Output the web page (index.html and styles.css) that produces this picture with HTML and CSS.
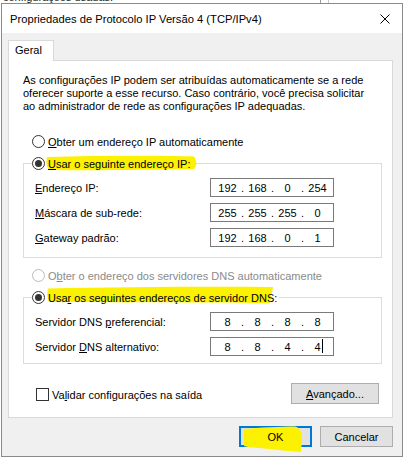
FILE: index.html
```html
<!DOCTYPE html>
<html lang="pt-BR">
<head>
<meta charset="utf-8">
<title>Propriedades de Protocolo IP Versão 4 (TCP/IPv4)</title>
<link rel="stylesheet" href="styles.css">
</head>
<body>
<div class="desk">
  <div class="bg-frag">configurações usadas:</div>
  <div class="bg-frame"></div>
  <div class="dialog">
    <div class="titlebar">
      <span class="title">Propriedades de Protocolo IP Versão 4 (TCP/IPv4)</span>
      <svg class="close" viewBox="0 0 10 10" width="10" height="10" aria-hidden="true">
        <path d="M0.5 0.5 L9.5 9.5 M9.5 0.5 L0.5 9.5" stroke="#000" stroke-width="1" fill="none"/>
      </svg>
    </div>
    <div class="body">
      <div class="tabs"><div class="tab">Geral</div></div>
      <div class="panel">
        <p class="intro">As configurações IP podem ser atribuídas automaticamente se a rede<br>oferecer suporte a esse recurso. Caso contrário, você precisa solicitar<br>ao administrador de rede as configurações IP adequadas.</p>

        <div class="opt first"><span class="radio"></span><span><u>O</u>bter um endereço IP automaticamente</span></div>

        <fieldset class="group">
          <legend><span class="opt"><span class="radio on"></span><span class="hl"><u>U</u>sar o seguinte endereço IP:</span></span></legend>
          <div class="field"><label><u>E</u>ndereço IP:</label>
            <div class="ip"><span class="seg">192</span><span class="dot">.</span><span class="seg">168</span><span class="dot">.</span><span class="seg">0</span><span class="dot">.</span><span class="seg">254</span></div>
          </div>
          <div class="field"><label><u>M</u>áscara de sub-rede:</label>
            <div class="ip"><span class="seg">255</span><span class="dot">.</span><span class="seg">255</span><span class="dot">.</span><span class="seg">255</span><span class="dot">.</span><span class="seg">0</span></div>
          </div>
          <div class="field"><label><u>G</u>ateway padrão:</label>
            <div class="ip"><span class="seg">192</span><span class="dot">.</span><span class="seg">168</span><span class="dot">.</span><span class="seg">0</span><span class="dot">.</span><span class="seg">1</span></div>
          </div>
        </fieldset>

        <div class="opt second disabled"><span class="radio off"></span><span>O<u>b</u>ter o endereço dos servidores DNS automaticamente</span></div>

        <fieldset class="group dns">
          <legend><span class="opt"><span class="radio on"></span><span class="hl">Usa<u>r</u> os seguintes endereços de servidor DNS:</span></span></legend>
          <div class="field"><label>Servidor DNS <u>p</u>referencial:</label>
            <div class="ip"><span class="seg">8</span><span class="dot">.</span><span class="seg">8</span><span class="dot">.</span><span class="seg">8</span><span class="dot">.</span><span class="seg">8</span></div>
          </div>
          <div class="field"><label>Servidor <u>D</u>NS alternativo:</label>
            <div class="ip"><span class="seg">8</span><span class="dot">.</span><span class="seg">8</span><span class="dot">.</span><span class="seg">4</span><span class="dot">.</span><span class="seg">4</span><span class="caret"></span></div>
          </div>
        </fieldset>

        <div class="bottom-row">
          <div class="check"><span class="box"></span><span>Va<u>l</u>idar configurações na saída</span></div>
          <button class="btn wide"><u>A</u>vançado...</button>
        </div>
      </div>
      <div class="actions">
        <button class="btn default"><span class="hl">OK</span></button>
        <button class="btn">Cancelar</button>
      </div>
    </div>
  </div>
  <svg class="marker" viewBox="0 0 404 458" width="404" height="458" aria-hidden="true">
    <path d="M47 157 C100 155.5 160 155.5 194 156.5 C197 160 197 166 194 169 C150 170 90 170.5 49 170 C46 166 46 160 47 157 Z"/>
    <path d="M48 288.5 C120 287 200 286.5 273 287 L270 303 C200 302.5 110 302.5 49 302 C47 298 47 292 48 288.5 Z"/>
    <path d="M244 429 C260 427.5 280 426.5 295 426.5 C300 427.5 302 432 302 440 L301 452 C285 451 262 448 248 447 L244 446 Z"/>
  </svg>
</div>
</body>
</html>
```

FILE: styles.css
```css
* {
  box-sizing: border-box;
}

html,
body {
  margin: 0;
  padding: 0;
}

body {
  background: #ffffff;
  font-family: "Liberation Sans", Arial, sans-serif;
  font-size: 11px;
  color: #000000;
}

.desk {
  position: relative;
  width: 404px;
  height: 458px;
  overflow: hidden;
  padding: 3px 0 0 1px;
  background: #ffffff;
}

.bg-frag {
  position: absolute;
  top: -9px;
  left: 3px;
  height: 12px;
  white-space: nowrap;
  overflow: hidden;
  color: #222;
}

.bg-frame {
  position: absolute;
  top: 0;
  left: 320px;
  width: 9px;
  height: 3px;
  border-left: 1px solid #9a9a9a;
  border-right: 1px solid #c8c8c8;
}

.dialog {
  width: 402px;
  height: 454px;
  border: 1px solid #8a8a8a;
  background: #f0f0f0;
  display: flex;
  flex-direction: column;
}

.titlebar {
  height: 29px;
  flex: none;
  background: #ffffff;
  display: flex;
  align-items: center;
  justify-content: space-between;
  padding: 0 12px 0 8px;
}

.title {
  white-space: nowrap;
  font-size: 11.2px;
}

.close {
  display: block;
}

.body {
  padding: 7px 9px 9px 6px;
}

.tabs {
  display: flex;
}

.tab {
  position: relative;
  z-index: 1;
  width: 46px;
  height: 21px;
  border: 1px solid #d9d9d9;
  border-bottom: 0;
  background: #ffffff;
  padding: 0 0 0 6px;
  line-height: 18px;
}

.panel {
  margin-top: -1px;
  width: 385px;
  height: 358px;
  border: 1px solid #d9d9d9;
  background: #ffffff;
  padding: 13px 0 0 14px;
}

.intro {
  margin: 0;
  line-height: 13px;
  white-space: nowrap;
}

.opt {
  display: flex;
  align-items: center;
  height: 15px;
  gap: 3px;
  white-space: nowrap;
}

.opt.first {
  margin: 21px 0 0 9px;
}

.opt.second {
  margin: 10px 0 0 9px;
}

.opt.disabled {
  color: #8a8a8a;
}

.radio {
  flex: none;
  width: 13px;
  height: 13px;
  border: 1px solid #333333;
  border-radius: 50%;
  background: #ffffff;
  display: flex;
  align-items: center;
  justify-content: center;
}

.radio.on::after {
  content: "";
  width: 7px;
  height: 7px;
  border-radius: 50%;
  background: #333333;
}

.radio.off {
  border-color: #bcbcbc;
}

.hl {
  position: relative;
  z-index: 3;
}

.group {
  width: 359px;
  min-width: 0;
  margin: 7px 0 0 0;
  padding: 7px 0 10px 8px;
  border: 1px solid #dcdcdc;
}

.group.dns {
  padding-bottom: 7px;
}

.group legend {
  padding: 0 2px 0 0;
  height: 15px;
}

.field {
  display: flex;
  align-items: center;
  height: 19px;
  margin-left: 3px;
  white-space: nowrap;
}

.field + .field {
  margin-top: 6px;
}

.field label {
  width: 175px;
}

.ip {
  position: relative;
  width: 124px;
  height: 19px;
  border: 1px solid #7a7a7a;
  background: #ffffff;
  display: flex;
  align-items: center;
  padding-left: 5px;
}

.seg {
  width: 23px;
  text-align: center;
}

.dot {
  width: 7px;
  text-align: center;
}

.caret {
  position: absolute;
  left: 111px;
  top: 1px;
  width: 1px;
  height: 14px;
  background: #000000;
}

.bottom-row {
  display: flex;
  align-items: center;
  justify-content: space-between;
  margin: 19px 13px 0 13px;
  height: 21px;
}

.check {
  display: flex;
  align-items: center;
  gap: 3px;
  margin-top: 2px;
  white-space: nowrap;
}

.box {
  width: 13px;
  height: 13px;
  border: 1px solid #333333;
  background: #ffffff;
}

.btn {
  width: 73px;
  height: 21px;
  padding: 0;
  border: 1px solid #adadad;
  background: #e1e1e1;
  font-family: inherit;
  font-size: 11px;
  color: #000000;
}

.btn.wide {
  width: 88px;
}

.btn.default {
  border: 2px solid #0078d7;
}

.actions {
  display: flex;
  justify-content: flex-end;
  gap: 8px;
  margin-top: 8px;
}

.marker {
  position: absolute;
  left: 0;
  top: 0;
  z-index: 2;
  pointer-events: none;
  fill: #fbf100;
}
```
